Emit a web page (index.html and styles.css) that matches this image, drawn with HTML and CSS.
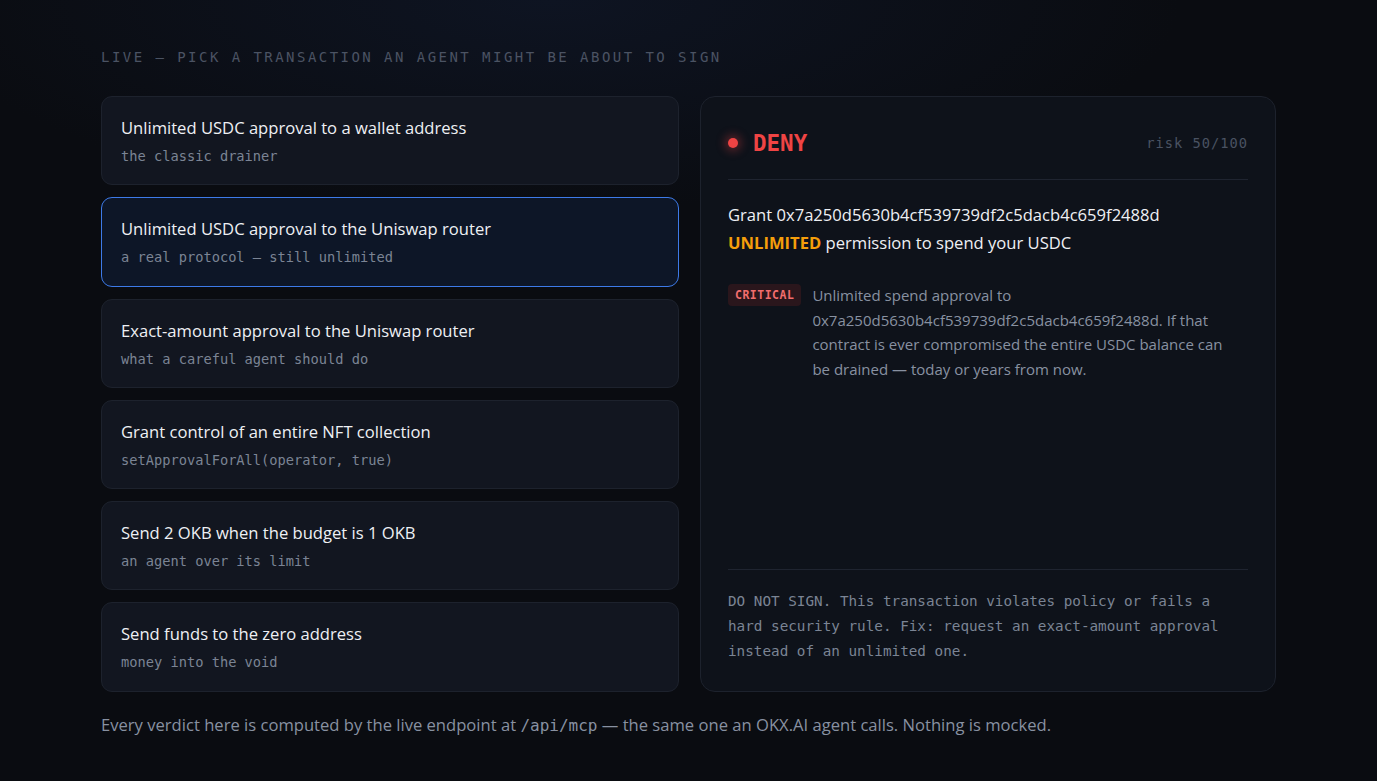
FILE: index.html
```html
<!DOCTYPE html>
<html lang="en">
<head>
  <meta charset="UTF-8">
  <meta name="viewport" content="width=device-width, initial-scale=1.0">
  <title>Agent transaction check</title>
  <link rel="stylesheet" href="styles.css">
</head>
<body>
  <div class="page">
    <div class="eyebrow">LIVE — PICK A TRANSACTION AN AGENT MIGHT BE ABOUT TO SIGN</div>
    <div class="demo">
      <div class="tx-list">
        <div class="tx">
          <div class="tx-title">Unlimited USDC approval to a wallet address</div>
          <div class="tx-sub">the classic drainer</div>
        </div>
        <div class="tx active">
          <div class="tx-title">Unlimited USDC approval to the Uniswap router</div>
          <div class="tx-sub">a real protocol — still unlimited</div>
        </div>
        <div class="tx">
          <div class="tx-title">Exact-amount approval to the Uniswap router</div>
          <div class="tx-sub">what a careful agent should do</div>
        </div>
        <div class="tx">
          <div class="tx-title">Grant control of an entire NFT collection</div>
          <div class="tx-sub">setApprovalForAll(operator, true)</div>
        </div>
        <div class="tx">
          <div class="tx-title">Send 2 OKB when the budget is 1 OKB</div>
          <div class="tx-sub">an agent over its limit</div>
        </div>
        <div class="tx">
          <div class="tx-title">Send funds to the zero address</div>
          <div class="tx-sub">money into the void</div>
        </div>
      </div>

      <div class="verdict">
        <div class="verdict-head">
          <div class="verdict-label"><span class="dot"></span>DENY</div>
          <div class="risk">risk 50/100</div>
        </div>
        <div class="summary">
          Grant 0x7a250d5630b4cf539739df2c5dacb4c659f2488d<br>
          <span class="warn">UNLIMITED</span> permission to spend your USDC
        </div>
        <div class="finding">
          <span class="badge">CRITICAL</span>
          <p>Unlimited spend approval to 0x7a250d5630b4cf539739df2c5dacb4c659f2488d. If that contract is ever compromised the entire USDC balance can be drained — today or years from now.</p>
        </div>
        <div class="advice">DO NOT SIGN. This transaction violates policy or fails a hard security rule. Fix: request an exact-amount approval instead of an unlimited one.</div>
      </div>
    </div>
    <p class="note">Every verdict here is computed by the live endpoint at <code>/api/mcp</code> — the same one an OKX.AI agent calls. Nothing is mocked.</p>
  </div>
</body>
</html>
```

FILE: styles.css
```css
html, body {
  margin: 0;
  height: 100%;
}
body {
  font-family: 'Open Sans', 'Noto Sans', sans-serif;
  background: radial-gradient(ellipse 900px 300px at 40% 0%, #0e1422 0%, rgba(10,12,18,0) 70%), #0a0c11;
  color: #e6e9ef;
}
.page {
  width: 1175px;
  margin: 0 auto;
  padding-top: 47px;
}
.eyebrow {
  font-family: 'DejaVu Sans Mono', monospace;
  font-size: 14px;
  letter-spacing: 2.46px;
  color: #4b5363;
  line-height: 20px;
}
.demo {
  display: grid;
  grid-template-columns: 578px 576px;
  gap: 21px;
  margin-top: 29px;
}
.tx-list {
  display: flex;
  flex-direction: column;
  gap: 12px;
}
.tx {
  height: 89.3px;
  box-sizing: border-box;
  padding: 19px 19px 0;
  background: #121620;
  border: 1px solid #1d222d;
  border-radius: 11px;
}
.tx.active {
  background: #0d1627;
  border-color: #3d7ae8;
}
.tx-title {
  font-size: 16.6px;
  line-height: 24px;
  color: #eef0f4;
}
.tx-sub {
  margin-top: 7px;
  font-family: 'DejaVu Sans Mono', monospace;
  font-size: 13.7px;
  line-height: 18px;
  color: #7b8494;
}
.verdict {
  display: flex;
  flex-direction: column;
  background: #0e121a;
  border: 1px solid #1d222d;
  border-radius: 15px;
  padding: 0 27px;
}
.verdict-head {
  display: flex;
  justify-content: space-between;
  align-items: center;
  height: 40px;
  padding: 26px 0 16px;
  border-bottom: 1px solid #1f2430;
}
.verdict-label {
  display: flex;
  align-items: center;
  gap: 15px;
  font-family: 'DejaVu Sans Mono', monospace;
  font-weight: bold;
  font-size: 22.5px;
  color: #ef4444;
}
.dot {
  width: 10px;
  height: 10px;
  border-radius: 50%;
  background: #ef4444;
  box-shadow: 0 0 10px 3px rgba(239, 68, 68, 0.35);
}
.risk {
  font-family: 'DejaVu Sans Mono', monospace;
  font-size: 13.7px;
  letter-spacing: 1px;
  color: #4a5262;
}
.summary {
  margin-top: 21px;
  font-size: 16.6px;
  line-height: 28px;
  color: #eef0f4;
}
.warn {
  color: #f59e0b;
  font-weight: bold;
}
.finding {
  display: flex;
  gap: 11px;
  margin-top: 26px;
}
.badge {
  flex: none;
  align-self: flex-start;
  margin-top: 1px;
  padding: 3px 7px;
  border-radius: 4px;
  background: #2a161c;
  color: #f26d6d;
  font-family: 'DejaVu Sans Mono', monospace;
  font-weight: bold;
  font-size: 11.5px;
  line-height: 16px;
  letter-spacing: 0.5px;
}
.finding p {
  margin: 0;
  max-width: 414px;
  font-size: 15px;
  line-height: 24.5px;
  color: #8891a1;
}
.advice {
  margin-top: auto;
  padding: 19px 0 27px;
  border-top: 1px solid #1f2430;
  font-family: 'DejaVu Sans Mono', monospace;
  font-size: 14.3px;
  line-height: 25px;
  color: #7b8494;
}
.note {
  margin: 21px 0 0;
  font-size: 16.6px;
  color: #8891a1;
}
.note code {
  font-family: 'DejaVu Sans Mono', monospace;
  font-size: 16px;
}
```
